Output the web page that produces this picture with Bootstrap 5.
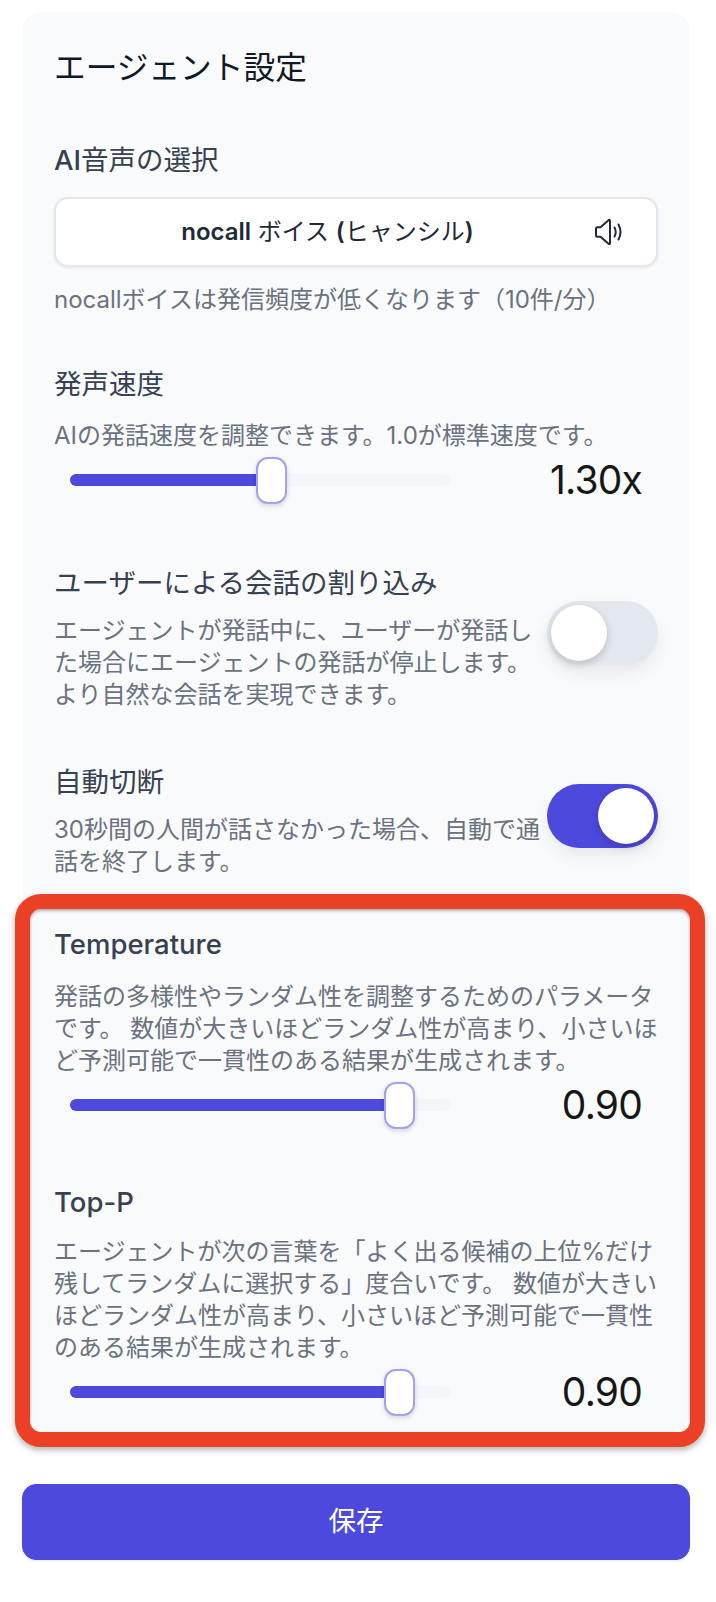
<!DOCTYPE html>
<html lang="ja">
<head>
<meta charset="utf-8">
<title>エージェント設定</title>
<link href="https://cdn.jsdelivr.net/npm/bootstrap@5.3.0/dist/css/bootstrap.min.css" rel="stylesheet">
<style>
html,body{margin:0;background:#fff;}
body{font-family:Inter,"Noto Sans CJK JP",sans-serif;width:716px;height:1602px;overflow:hidden;position:relative;}
.shell{padding:12px 26px 0 22px;}
.panel{background:#f9fafc;border-radius:20px;padding:32px 32px 16px 32px;}
.ttl{font-size:31.7px;line-height:48px;color:#111827;font-weight:400;margin:0 0 49px;}
.lbl{font-size:27.5px;line-height:38px;color:#374151;font-weight:400;margin:0;}
.latin{font-weight:500;}
.dsc{font-size:24px;line-height:32px;color:#6b7280;margin:0;}
.voice{height:70px;border:2px solid #e2e8f0;border-radius:14px;background:#fff;box-shadow:0 1px 3px rgba(0,0,0,.08);margin:18px 0 17px;padding:0 32px 0 0;}
.voice-name{font-size:24px;font-weight:400;color:#1f2937;padding-left:5px;}
.slide-row{padding-left:16px;padding-right:16px;height:48px;margin-top:4px;}
.slide{width:380px;height:48px;-webkit-appearance:none;appearance:none;background:transparent;flex:none;padding:0;}
.slide::-webkit-slider-runnable-track{height:12px;border-radius:6px;background:linear-gradient(to right,#4d49dc var(--p),#f3f5f9 var(--p));}
.slide::-webkit-slider-thumb{-webkit-appearance:none;appearance:none;width:31px;height:47px;margin-top:-17.5px;border-radius:12px;background:#fff;border:2px solid #a5a0ef;box-shadow:0 2px 5px rgba(0,0,0,.15);}
.val{font-size:39px;line-height:48px;color:#171717;letter-spacing:-.8px;}
.sw{flex:none;width:111px;height:64px;border-radius:32px;padding:4px;margin-bottom:10px;box-shadow:0 8px 16px rgba(0,0,0,.07);}
.sw-off{background:#e3e7ee;}
.sw-on{background:#4d49dc;}
.knob{width:56px;height:56px;border-radius:50%;background:#fff;box-shadow:0 3px 8px rgba(0,0,0,.18);}
.frame{position:absolute;left:15px;top:894px;width:690px;height:553px;border:15px solid #ea4026;border-radius:26px;box-shadow:0 3px 6px rgba(0,0,0,.3),inset 0 2px 3px rgba(0,0,0,.3);pointer-events:none;}
.save{display:block;height:76px;width:668px;margin-top:52px;background:#4d49dc;border-color:#4d49dc;border-radius:14px;color:#fff;font-size:27.5px;box-shadow:0 1px 3px rgba(0,0,0,.08);}
.gap-47{margin-top:47px;}
.gap-49{margin-top:49px;}
.gap-60{margin-top:60px;}
.gap-52{margin-top:52px;}
.gap-54{margin-top:54px;}
.dsc-13{margin-top:13px;}
.dsc-15{margin-top:15px;}
.dsc-17{margin-top:17px;}
.dsc-18{margin-top:18px;}
.txtcol{width:490px;flex:none;}
</style>
</head>
<body>
<div class="shell">
  <div class="panel">
    <h1 class="ttl">エージェント設定</h1>

    <h2 class="lbl"><span class="latin">AI</span>音声の選択</h2>
    <div class="voice d-flex align-items-center">
      <span class="voice-name flex-grow-1 text-center"><span class="fw-semibold">nocall</span> ボイス <span class="fw-semibold">(</span>ヒャンシル<span class="fw-semibold">)</span></span>
      <svg width="30" height="28" viewBox="0 0 30 28" fill="none" stroke="#1f2937" stroke-width="2" stroke-linecap="round" stroke-linejoin="round" aria-hidden="true"><path d="M2 10.500v7q0 1.200 1.200 1.200h3.300l8 7q1.500 1 1.500-.7V2.900q0-1.700-1.500-.7l-8 7H3.200Q2 9.300 2 10.500z"/><path d="M20.500 9.500q2.500 4.500 0 9"/><path d="M24.500 6.500q4 7.500 0 15"/></svg>
    </div>
    <p class="dsc">nocallボイスは発信頻度が低くなります（10件/分）</p>

    <h2 class="lbl gap-49">発声速度</h2>
    <p class="dsc dsc-17">AIの発話速度を調整できます。1.0が標準速度です。</p>
    <div class="slide-row d-flex align-items-center">
      <input class="slide form-range" type="range" min="0.5" max="2" step="0.01" value="1.3" style="--p:53%" aria-label="発声速度">
      <span class="val flex-grow-1 text-end">1.30x</span>
    </div>

    <div class="d-flex justify-content-between align-items-center gap-60">
      <div class="txtcol">
        <h2 class="lbl text-nowrap">ユーザーによる会話の割り込み</h2>
        <p class="dsc dsc-13">エージェントが発話中に、ユーザーが発話した場合にエージェントの発話が停止します。より自然な会話を実現できます。</p>
      </div>
      <div class="sw sw-off d-flex justify-content-start"><div class="knob"></div></div>
    </div>

    <div class="d-flex justify-content-between align-items-center gap-52">
      <div class="txtcol">
        <h2 class="lbl">自動切断</h2>
        <p class="dsc dsc-13">30秒間の人間が話さなかった場合、自動で通話を終了します。</p>
      </div>
      <div class="sw sw-on d-flex justify-content-end"><div class="knob"></div></div>
    </div>

    <h2 class="lbl latin gap-47">Temperature</h2>
    <p class="dsc dsc-18">発話の多様性やランダム性を調整するためのパラメータです。 数値が大きいほどランダム性が高まり、小さいほど予測可能で一貫性のある結果が生成されます。</p>
    <div class="slide-row d-flex align-items-center">
      <input class="slide form-range" type="range" min="0" max="1" step="0.01" value="0.9" style="--p:86%" aria-label="Temperature">
      <span class="val flex-grow-1 text-end">0.90</span>
    </div>

    <h2 class="lbl latin gap-54">Top-P</h2>
    <p class="dsc dsc-15">エージェントが次の言葉を「よく出る候補の上位%だけ残してランダムに選択する」度合いです。 数値が大きいほどランダム性が高まり、小さいほど予測可能で一貫性のある結果が生成されます。</p>
    <div class="slide-row d-flex align-items-center">
      <input class="slide form-range" type="range" min="0" max="1" step="0.01" value="0.9" style="--p:86%" aria-label="Top-P">
      <span class="val flex-grow-1 text-end">0.90</span>
    </div>
  </div>
  <button type="button" class="btn save">保存</button>
</div>
<div class="frame"></div>
<script src="https://cdn.jsdelivr.net/npm/bootstrap@5.3.0/dist/js/bootstrap.bundle.min.js"></script>
</body>
</html>
